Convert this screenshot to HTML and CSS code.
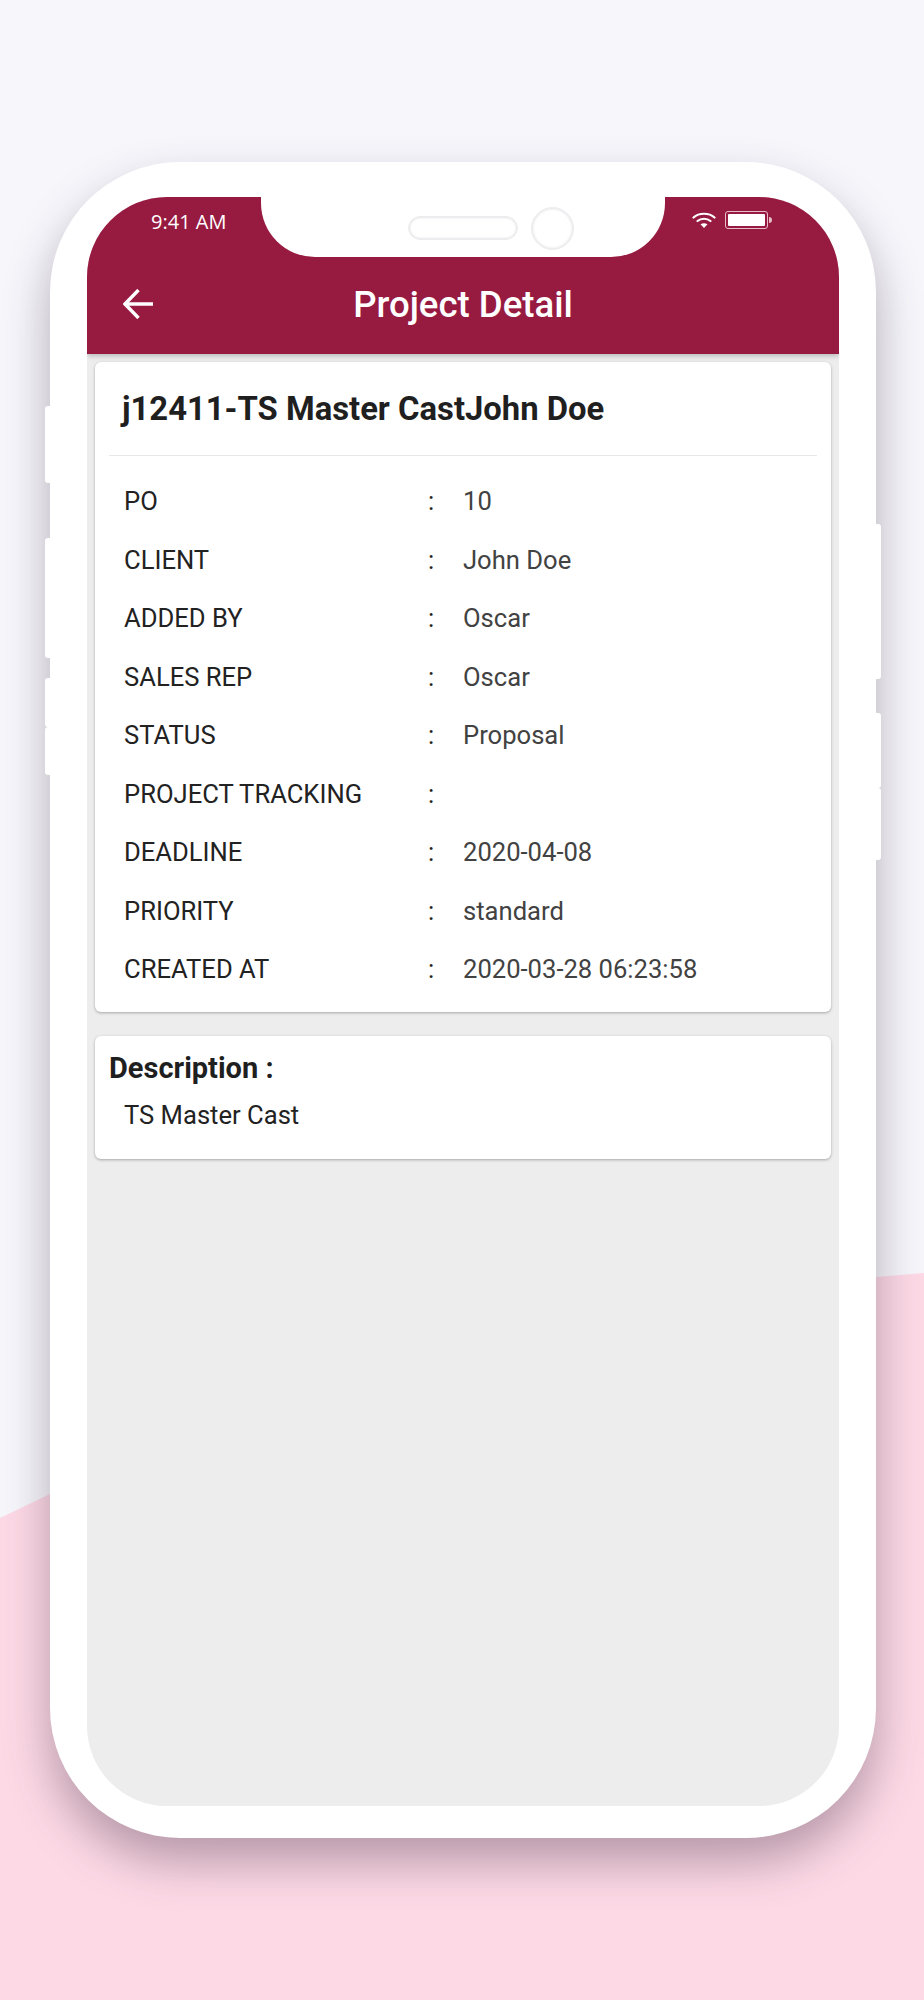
FILE: index.html
```html
<!DOCTYPE html>
<html lang="en">
<head>
    <meta charset="UTF-8">
    <meta name="viewport" content="width=device-width, initial-scale=1.0">
    <title>Project Detail</title>
    <link rel="stylesheet" href="styles.css">
</head>
<body>
    <!-- Pink wave behind the phone -->
    <svg class="wave" width="924" height="2000" viewBox="0 0 924 2000">
        <path d="M0 1518 L50 1494 C250 1400 600 1295 876 1277 L924 1273 V2000 H0 Z" fill="#fdd9e6"/>
    </svg>

    <div class="phone">
        <span class="side-btn left btn1"></span>
        <span class="side-btn left btn2"></span>
        <span class="side-btn left btn3"></span>
        <span class="side-btn left btn4"></span>
        <span class="side-btn right btn5"></span>
        <span class="side-btn right btn6"></span>
        <span class="side-btn right btn7"></span>

        <div class="screen">
            <header class="app-bar">
                <div class="status-bar">
                    <span class="time">9:41 AM</span>
                    <div class="notch">
                        <span class="speaker"></span>
                        <span class="camera"></span>
                    </div>
                    <div class="status-icons">
                        <svg width="24" height="18" viewBox="0 0 24 18" fill="none" stroke="#fff" stroke-width="2.2" stroke-linecap="round">
                            <path d="M1.5 6.5 C7 1.5 17 1.5 22.5 6.5"/>
                            <path d="M5.5 10 C9 7 15 7 18.5 10"/>
                            <path d="M8.5 13.2 L12 17 L15.5 13.2 C13 12 11 12 8.5 13.2 Z" fill="#fff" stroke="none"/>
                        </svg>
                        <div class="battery"><span class="battery-fill"></span></div>
                        <span class="battery-tip"></span>
                    </div>
                </div>
                <div class="toolbar">
                    <svg class="back" width="30" height="30" viewBox="0 0 30 30" fill="none" stroke="#fff" stroke-width="3.4">
                        <path d="M30 15 H3"/>
                        <path d="M15.5 1 L2 15 L15.5 29"/>
                    </svg>
                    <h1>Project Detail</h1>
                </div>
            </header>

            <div class="content">
                <section class="card">
                    <h2>j12411-TS Master CastJohn Doe</h2>
                    <div class="divider"></div>
                    <div class="rows">
                        <div class="row"><span class="label">PO</span><span class="colon">:</span><span class="value">10</span></div>
                        <div class="row"><span class="label">CLIENT</span><span class="colon">:</span><span class="value">John Doe</span></div>
                        <div class="row"><span class="label">ADDED BY</span><span class="colon">:</span><span class="value">Oscar</span></div>
                        <div class="row"><span class="label">SALES REP</span><span class="colon">:</span><span class="value">Oscar</span></div>
                        <div class="row"><span class="label">STATUS</span><span class="colon">:</span><span class="value">Proposal</span></div>
                        <div class="row"><span class="label">PROJECT TRACKING</span><span class="colon">:</span><span class="value"></span></div>
                        <div class="row"><span class="label">DEADLINE</span><span class="colon">:</span><span class="value">2020-04-08</span></div>
                        <div class="row"><span class="label">PRIORITY</span><span class="colon">:</span><span class="value">standard</span></div>
                        <div class="row"><span class="label">CREATED AT</span><span class="colon">:</span><span class="value">2020-03-28 06:23:58</span></div>
                    </div>
                </section>

                <section class="card desc">
                    <h3>Description :</h3>
                    <p>TS Master Cast</p>
                </section>
            </div>
        </div>
    </div>
</body>
</html>
```

FILE: styles.css
```css
html, body {
    margin: 0;
    height: 2000px;
    overflow: hidden;
}

body {
    position: relative;
    background-color: #f6f6fb;
    font-family: Roboto, "Liberation Sans", sans-serif;
    padding-top: 162px;
    box-sizing: border-box;
}

.wave {
    position: absolute;
    left: 0;
    top: 0;
}

.phone {
    position: relative;
    width: 826px;
    height: 1676px;
    margin-left: 50px;
    box-sizing: border-box;
    padding: 35px 37px 32px 37px;
    background-color: #fff;
    border-radius: 130px;
    box-shadow: 0 24px 46px rgba(70, 50, 70, 0.38);
}

.side-btn {
    position: absolute;
    width: 8px;
    background-color: #fff;
}

.side-btn.left { left: -5px; border-radius: 3px 0 0 3px; }
.side-btn.right { right: -5px; border-radius: 0 3px 3px 0; }
.btn1 { top: 244px; height: 77px; }
.btn2 { top: 376px; height: 120px; }
.btn3 { top: 516px; height: 49px; }
.btn4 { top: 565px; height: 48px; }
.btn5 { top: 362px; height: 155px; }
.btn6 { top: 551px; height: 75px; }
.btn7 { top: 626px; height: 72px; }

.screen {
    display: flex;
    flex-direction: column;
    height: 100%;
    background-color: #ededed;
    border-radius: 80px;
    overflow: hidden;
}

.app-bar {
    flex: none;
    height: 157px;
    background-color: #971a41;
    box-shadow: 0 2px 5px rgba(0, 0, 0, 0.22);
    position: relative;
}

.status-bar {
    display: flex;
    height: 60px;
    color: #fff;
}

.time {
    width: 174px;
    box-sizing: border-box;
    padding: 13px 0 0 64px;
    font-family: "Open Sans", sans-serif;
    font-size: 20px;
    line-height: 24px;
}

.notch {
    width: 404px;
    display: flex;
    justify-content: center;
    align-items: center;
    gap: 13px;
    background-color: #fff;
    border-radius: 0 0 54px 54px;
    padding: 2px 0 0 56px;
    box-sizing: border-box;
}

.speaker {
    width: 110px;
    height: 24px;
    box-sizing: border-box;
    background-color: #fff;
    border: 1px solid #ececef;
    border-radius: 12px;
    box-shadow: inset 0 0 3px rgba(90, 90, 110, 0.3);
}

.camera {
    width: 43px;
    height: 43px;
    box-sizing: border-box;
    background-color: #fff;
    border: 1px solid #ececef;
    border-radius: 50%;
    box-shadow: inset 0 0 3px rgba(90, 90, 110, 0.3);
}

.status-icons {
    display: flex;
    align-items: center;
    height: 18px;
    margin: 14px 0 0 27px;
}

.battery {
    width: 43px;
    height: 18px;
    box-sizing: border-box;
    margin-left: 9px;
    padding: 2px;
    border: 1px solid #e6bcc9;
    border-radius: 3px;
}

.battery-fill {
    display: block;
    height: 100%;
    background-color: #fff;
    border-radius: 1px;
}

.battery-tip {
    width: 3px;
    height: 6px;
    margin-left: 1px;
    background-color: #e6bcc9;
    border-radius: 0 3px 3px 0;
}

.toolbar {
    position: relative;
    display: flex;
    justify-content: center;
    align-items: center;
    height: 97px;
    padding-bottom: 2px;
    box-sizing: border-box;
}

.back {
    position: absolute;
    left: 36px;
    top: 32px;
}

.toolbar h1 {
    margin: 0;
    color: #fff;
    font-size: 36.6px;
    font-weight: 500;
}

.content {
    flex: 1;
    display: flex;
    flex-direction: column;
    gap: 24px;
    padding: 8px 8px 0 8px;
}

.card {
    background-color: #fff;
    border-radius: 6px;
    box-shadow: 0 1px 3px rgba(0, 0, 0, 0.3);
}

.card h2 {
    margin: 0;
    padding: 25px 0 0 27px;
    height: 69px;
    box-sizing: border-box;
    font-size: 32.8px;
    font-weight: 700;
    line-height: 45px;
    color: #1f1f1f;
}

.divider {
    height: 1px;
    margin: 24px 14px 0 14px;
    background-color: #e8e8e8;
}

.rows {
    padding: 16px 0 13.5px 29px;
}

.row {
    display: flex;
    height: 58.5px;
    align-items: center;
    font-size: 25.6px;
    color: #222;
}

.label {
    width: 304px;
}

.colon {
    width: 35px;
}

.value {
    color: #424242;
}

.desc {
    height: 123px;
    box-sizing: border-box;
    padding: 14px 0 0 14px;
}

.desc h3 {
    margin: 0;
    font-size: 29px;
    font-weight: 700;
    line-height: 36px;
    color: #1f1f1f;
}

.desc p {
    margin: 14px 0 0 15px;
    font-size: 25.6px;
    line-height: 30px;
    color: #222;
}
```
